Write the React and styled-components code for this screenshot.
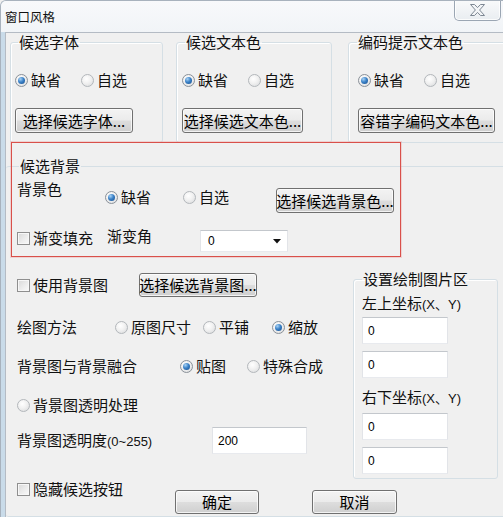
import React from "react";
import styled, { createGlobalStyle } from "styled-components";

const CJK = `"Noto Sans CJK SC", "Noto Sans", sans-serif`;
const LATIN = `"Liberation Sans", "Noto Sans CJK SC", sans-serif`;

const GlobalStyle = createGlobalStyle`
  html, body { margin: 0; padding: 0; background: #f0f0f0; }
  body { font-family: ${CJK}; }
  * { box-sizing: border-box; }
`;

const Window = styled.div`
  position: relative;
  width: 503px;
  height: 517px;
  overflow: hidden;
  display: flex;
  flex-direction: column;
  background: linear-gradient(to right, #c9dbe9, #dde8f1);
  border-top: 1px solid #a8b2bd;
  border-left: 1px solid #a8b2bd;
  border-top-left-radius: 6px;
  font-family: ${CJK};
  color: #000;
`;

const TitleBar = styled.div`
  flex: 0 0 31px;
  display: flex;
  align-items: flex-start;
  background: linear-gradient(to bottom, #f8f9fb, #f1f4f7);
`;

const Title = styled.div`
  margin: 8px 0 0 4px;
  font-size: 12.5px;
  line-height: 16px;
  color: #111;
`;

const CloseButton = styled.div`
  margin: -1px 2px 0 auto;
  width: 47px;
  height: 21px;
  display: flex;
  align-items: center;
  justify-content: center;
  border: 1px solid #9ba6b3;
  border-top: none;
  border-radius: 0 0 5px 5px;
  background: linear-gradient(to bottom, #f9fafb, #e9edf1);
  box-shadow: inset 0 0 0 1px rgba(255, 255, 255, 0.8);
`;

const Client = styled.div`
  position: relative;
  flex: 1;
  margin-left: 4px;
  display: flex;
  flex-direction: column;
  background: #f0f0f0;
  border-top: 1px solid #b4bbc4;
  border-left: 1px solid #b4bbc4;
  overflow: hidden;
`;

const TopGroups = styled.div`
  display: flex;
  padding-left: 4px;
`;

const Group = styled.fieldset`
  margin: 0 0 0 ${(p) => p.$ml ?? 0}px;
  padding: 0;
  min-width: 0;
  width: ${(p) => p.$w}px;
  height: ${(p) => p.$h}px;
  flex: 0 0 auto;
  border: 1px solid #d5dfe5;
  border-radius: 3px;
  box-shadow: inset 1px 1px 0 #fff;
`;

const BigGroup = styled.fieldset`
  margin: 14px 0 0 0;
  padding: 0 0 0 11px;
  min-width: 0;
  width: 510px;
  flex: 1;
  border: 1px solid #d5dfe5;
  border-left: none;
  border-radius: 3px;
`;

const Legend = styled.legend`
  margin-left: ${(p) => p.$ml ?? 7}px;
  padding: 0 1px;
  font-size: 15px;
  line-height: 18px;
  color: #111;
`;

const GroupBody = styled.div`
  display: flex;
  flex-direction: column;
  align-items: flex-start;
  gap: 18px;
  padding: 19px 0 0 ${(p) => p.$pad}px;
`;

const OptionRow = styled.div`
  display: flex;
  gap: 20px;
`;

const Row = styled.div`
  display: grid;
  grid-template-columns: ${(p) => p.$cols || "auto"};
  align-items: ${(p) => p.$align || "start"};
  justify-items: start;
  margin-top: ${(p) => p.$mt ?? 0}px;
`;

const Label = styled.div`
  font-size: 15px;
  line-height: 20px;
  white-space: nowrap;
  color: #111;
  margin-top: ${(p) => p.$dy ?? 0}px;
`;

const Small = styled.span`
  font-family: ${LATIN};
  font-size: 13px;
`;

const OptionLabel = styled.div`
  display: inline-flex;
  align-items: center;
  gap: 3px;
  font-size: 15px;
  line-height: 20px;
  white-space: nowrap;
  color: #111;
  margin-top: ${(p) => p.$dy ?? 0}px;
`;

const RadioMark = styled.span`
  position: relative;
  flex: 0 0 13px;
  width: 13px;
  height: 13px;
  border-radius: 50%;
  border: 1px solid ${(p) => (p.$on ? "#8a9199" : "#b3b7bb")};
  background: radial-gradient(circle at 40% 35%, #ffffff 0%, #f1f1f1 45%, #d6d8da 100%);
  &::after {
    content: "";
    display: ${(p) => (p.$on ? "block" : "none")};
    position: absolute;
    left: 2px;
    top: 2px;
    width: 7px;
    height: 7px;
    border-radius: 50%;
    background: radial-gradient(circle at 35% 30%, #a9d3f5 0%, #3b82c8 45%, #174c8a 100%);
  }
`;

const CheckMark = styled.span`
  flex: 0 0 13px;
  width: 13px;
  height: 13px;
  border: 1px solid #8f8f8f;
  background: linear-gradient(135deg, #d8d8d8 0%, #ececec 55%, #fafafa 100%);
  box-shadow: inset 0 0 0 1px #f7f7f7;
`;

const PushButton = styled.button`
  width: ${(p) => p.$w}px;
  height: ${(p) => p.$h ?? 25}px;
  margin-top: ${(p) => p.$dy ?? 0}px;
  padding: 0;
  display: flex;
  align-items: center;
  justify-content: center;
  border: 1px solid #707070;
  border-radius: 3px;
  background: linear-gradient(to bottom, #f3f3f3 0%, #ebebeb 48%, #dddddd 52%, #cfcfcf 100%);
  box-shadow: inset 0 0 0 1px rgba(255, 255, 255, 0.75);
  font-family: ${CJK};
  font-size: 15px;
  line-height: 20px;
  color: #000;
  white-space: nowrap;
`;

const TextBox = styled.div`
  width: ${(p) => p.$w}px;
  height: ${(p) => p.$h ?? 27}px;
  margin-top: ${(p) => p.$mt ?? 0}px;
  padding: 0 0 0 5px;
  display: flex;
  align-items: center;
  background: #fff;
  border: 1px solid;
  border-color: #c3c7cc #e2e4e8 #e8eaee #e2e4e8;
  font-family: ${LATIN};
  font-size: 12px;
  color: #000;
`;

const Combo = styled.div`
  width: 88px;
  height: 22px;
  margin-top: ${(p) => p.$dy ?? 0}px;
  padding: 0 6px 0 7px;
  display: flex;
  align-items: center;
  justify-content: space-between;
  background: #fff;
  border: 1px solid;
  border-color: #c3c7cc #e2e4e8 #e8eaee #e2e4e8;
  font-family: ${LATIN};
  font-size: 12px;
  color: #000;
`;

const Lower = styled.div`
  display: grid;
  grid-template-columns: 336px 145px;
  margin-top: 18px;
`;

const LeftCol = styled.div`
  display: flex;
  flex-direction: column;
  padding-top: 3px;
`;

const SideGroup = styled.fieldset`
  margin: 0;
  padding: 0 0 0 8px;
  min-width: 0;
  width: 145px;
  height: 209px;
  border: 1px solid #d5dfe5;
  border-radius: 3px;
  box-shadow: inset 1px 1px 0 #fff;
`;

const SideBody = styled.div`
  display: flex;
  flex-direction: column;
  align-items: flex-start;
`;

const RedMark = styled.div`
  position: absolute;
  left: 5px;
  top: 109px;
  width: 390px;
  height: 115px;
  border: 1px solid #d9504a;
  box-shadow: 0 0 0 1px rgba(230, 120, 120, 0.25);
  pointer-events: none;
`;

function Radio({ on, dy, children }) {
  return (
    <OptionLabel $dy={dy}>
      <RadioMark $on={on} />
      {children}
    </OptionLabel>
  );
}

function Check({ dy, children }) {
  return (
    <OptionLabel $dy={dy}>
      <CheckMark />
      {children}
    </OptionLabel>
  );
}

function CloseGlyph() {
  return (
    <svg width="15" height="12" viewBox="0 0 15 12">
      <polygon
        points="0.5,0.5 4.5,0.5 7.5,3.6 10.5,0.5 14.5,0.5 9.6,6 14.5,11.5 10.5,11.5 7.5,8.4 4.5,11.5 0.5,11.5 5.4,6"
        fill="#f3f5f7"
        stroke="#7d8793"
        strokeWidth="1"
        strokeLinejoin="round"
      />
    </svg>
  );
}

function Arrow() {
  return (
    <svg width="8" height="5" viewBox="0 0 8 5">
      <polygon points="0,0 8,0 4,4.5" fill="#111" />
    </svg>
  );
}

export default function App() {
  return (
    <>
      <GlobalStyle />
      <Window>
        <TitleBar>
          <Title>窗口风格</Title>
          <CloseButton>
            <CloseGlyph />
          </CloseButton>
        </TitleBar>
        <Client>
          <TopGroups>
            <Group $w={153} $h={110}>
              <Legend>候选字体</Legend>
              <GroupBody $pad={4}>
                <OptionRow>
                  <Radio on>缺省</Radio>
                  <Radio>自选</Radio>
                </OptionRow>
                <PushButton $w={118}>选择候选字体...</PushButton>
              </GroupBody>
            </Group>
            <Group $w={156} $h={110} $ml={13}>
              <Legend $ml={8}>候选文本色</Legend>
              <GroupBody $pad={5}>
                <OptionRow>
                  <Radio on>缺省</Radio>
                  <Radio>自选</Radio>
                </OptionRow>
                <PushButton $w={121}>选择候选文本色...</PushButton>
              </GroupBody>
            </Group>
            <Group $w={160} $h={110} $ml={16}>
              <Legend $ml={8}>编码提示文本色</Legend>
              <GroupBody $pad={9}>
                <OptionRow>
                  <Radio on>缺省</Radio>
                  <Radio>自选</Radio>
                </OptionRow>
                <PushButton $w={137}>容错字编码文本色...</PushButton>
              </GroupBody>
            </Group>
          </TopGroups>

          <BigGroup>
            <Legend $ml={2}>候选背景</Legend>
            <Row $cols="88px 78px 93px auto" $mt={4}>
              <Label>背景色</Label>
              <Radio on dy={8}>缺省</Radio>
              <Radio dy={8}>自选</Radio>
              <PushButton $w={118} $dy={9}>选择候选背景色...</PushButton>
            </Row>
            <Row $cols="90px 93px auto" $mt={15}>
              <Check>渐变填充</Check>
              <Label $dy={-2}>渐变角</Label>
              <Combo $dy={2}>
                <span>0</span>
                <Arrow />
              </Combo>
            </Row>

            <Lower>
              <LeftCol>
                <Row $cols="122px auto" $align="center">
                  <Check>使用背景图</Check>
                  <PushButton $w={118} $h={24}>选择候选背景图...</PushButton>
                </Row>
                <Row $cols="98px 88px 69px auto" $mt={20}>
                  <Label>绘图方法</Label>
                  <Radio>原图尺寸</Radio>
                  <Radio>平铺</Radio>
                  <Radio on>缩放</Radio>
                </Row>
                <Row $cols="163px 67px auto" $mt={19}>
                  <Label>背景图与背景融合</Label>
                  <Radio on>贴图</Radio>
                  <Radio>特殊合成</Radio>
                </Row>
                <Row $mt={19}>
                  <Radio>背景图透明处理</Radio>
                </Row>
                <Row $cols="195px auto" $align="center" $mt={12}>
                  <Label>
                    背景图透明度<Small>(0~255)</Small>
                  </Label>
                  <TextBox $w={95}>200</TextBox>
                </Row>
              </LeftCol>

              <SideGroup>
                <Legend $ml={0}>设置绘制图片区</Legend>
                <SideBody>
                  <Label $dy={5}>
                    左上坐标<Small>(X、Y)</Small>
                  </Label>
                  <TextBox $w={86} $mt={2}>0</TextBox>
                  <TextBox $w={86} $mt={7}>0</TextBox>
                  <Label $dy={9}>
                    右下坐标<Small>(X、Y)</Small>
                  </Label>
                  <TextBox $w={86} $mt={4}>0</TextBox>
                  <TextBox $w={86} $mt={7}>0</TextBox>
                </SideBody>
              </SideGroup>
            </Lower>

            <Row $cols="158px 137px auto" $mt={3}>
              <Check dy={-3}>隐藏候选按钮</Check>
              <PushButton $w={84} $h={24} $dy={8}>确定</PushButton>
              <PushButton $w={85} $h={24} $dy={8}>取消</PushButton>
            </Row>
          </BigGroup>

          <RedMark />
        </Client>
      </Window>
    </>
  );
}
